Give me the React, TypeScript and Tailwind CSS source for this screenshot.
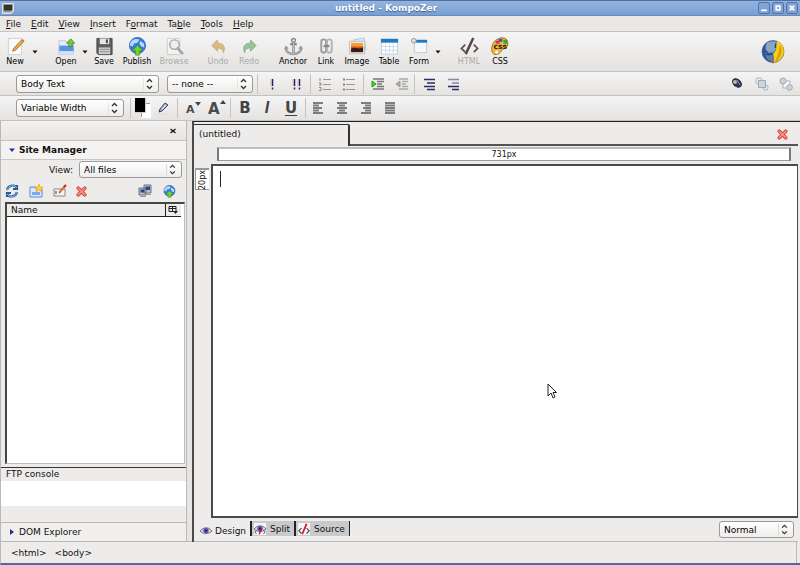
import type { ReactNode } from "react";
import clsx from "clsx";

const MENUS = ["File", "Edit", "View", "Insert", "Format", "Table", "Tools", "Help"];
// index of the underlined access key in each menu name
const MENU_KEYS = [0, 0, 0, 0, 1, 2, 0, 0];

const BAR = "bg-linear-to-b from-[#f6f5f5] to-[#e4e3e1] border-b border-[#c3c2c0]";

function Chevrons() {
  return (
    <svg className="pointer-events-none absolute top-0 right-1 h-full w-3" viewBox="0 0 12 18" fill="none" stroke="#333" strokeWidth="1.3">
      <path d="M0 3v12" stroke="#d4d3d1" strokeWidth="1" />
      <path d="M4 7 6.5 4.5 9 7M4 11 6.5 13.5 9 11" />
    </svg>
  );
}

function Select({ label, value, className }: { label: string; value: string; className: string }) {
  return (
    <div className={clsx("relative shrink-0", className)}>
      <select
        aria-label={label}
        className="block h-full w-full appearance-none rounded-[3px] border border-[#9b9a98] bg-linear-to-b from-white to-[#eeedeb] pr-4 pl-1 text-black"
      >
        <option>{value}</option>
      </select>
      <Chevrons />
    </div>
  );
}

function Sep({ className }: { className?: string }) {
  return <div className={clsx("h-5 w-px shrink-0 bg-[#c4c3c1]", className)} />;
}

function Tool({ label, off, className, children }: { label: string; off?: boolean; className?: string; children: ReactNode }) {
  return (
    <button disabled={off} className={clsx("flex w-[30px] shrink-0 flex-col items-center", className)}>
      <svg className={clsx("mb-px h-[19px] w-[19px]", off && label !== "HTML" && "opacity-60")} viewBox="0 0 20 20" fill="none">
        {children}
      </svg>
      <span className={clsx("text-[8px] leading-[9px] whitespace-nowrap", off ? "text-[#aaa9a7]" : "text-black")}>{label}</span>
    </button>
  );
}

function DropArrow({ label, className }: { label: string; className?: string }) {
  return (
    <button aria-label={label} className={clsx("w-2 shrink-0", className)}>
      <svg className="mx-auto h-1 w-1.5" viewBox="0 0 6 4">
        <path d="M0.5 0.5h5L3 3.5z" fill="#111" />
      </svg>
    </button>
  );
}

function Globe() {
  return (
    <>
      <circle cx="10" cy="9" r="8.5" fill="#2f7bdc" stroke="#3d6fb4" />
      <path d="M4 4c3-3 7-2 8-1l-2 3-4 1-1 3-3-1c0-2 1-4 2-5zM13 4l4 3v4l-3-1-2-3z" fill="#b5dafc" />
      <path d="m10 9 5.5 5.500H12V19H8v-4.500H4.500z" fill="#73d52a" stroke="#4da01c" />
    </>
  );
}

function RedCross() {
  return (
    <svg className="h-[11px] w-[11px]" viewBox="0 0 12 12" fill="none">
      <path d="M2.5 2.5 9.5 9.5M9.5 2.5 2.5 9.5" stroke="#d8443c" strokeWidth="4" strokeLinecap="round" />
      <path d="M2.5 2.5 9.5 9.5M9.5 2.5 2.5 9.5" stroke="#f68d84" strokeWidth="2" strokeLinecap="round" />
    </svg>
  );
}

function Mini({ label, className, children }: { label: string; className?: string; children: ReactNode }) {
  return (
    <button aria-label={label} className={clsx("flex h-4 w-4 shrink-0 items-center justify-center", className)}>
      <svg className="h-[14px] w-[14px]" viewBox="0 0 14 14" fill="none">
        {children}
      </svg>
    </button>
  );
}

function TitleBar() {
  return (
    <header className="flex h-4 shrink-0 items-center border-t border-b border-t-[#51709f] border-b-[#6889b9] bg-linear-to-b from-[#93b3e0] to-[#789fd3] px-0.5">
      <svg className="h-3 w-3" viewBox="0 0 12 12">
        <path d="M0 1h12v8l-3 3H0z" fill="#e0dfd8" />
        <path d="M1 2h10v6L8.5 10.5H1z" fill="#999" />
        <path d="M2 3h8v5.5H2z" fill="#30332f" />
      </svg>
      <h1 className="flex-1 text-center font-bold text-white [text-shadow:0_1px_1px_#3e5f91]">untitled - KompoZer</h1>
      <div className="flex gap-0.5">
        {["M3.5 9h6", "M4.5 4.5h4v4h-4z", "M4 4l5 5M9 4 4 9"].map((d, i) => (
          <button key={d} aria-label={["Minimize", "Maximize", "Close"][i]} className="h-3 w-3">
            <svg className="h-3 w-3" viewBox="0 0 13 13" fill="none">
              <rect x=".5" y=".5" width="12" height="12" rx="2" fill="#82a4d3" stroke="#45689e" />
              <path d={d} stroke="#fff" strokeWidth="1.8" />
            </svg>
          </button>
        ))}
      </div>
    </header>
  );
}

function MenuBar() {
  return (
    <nav className="flex h-4 shrink-0 items-center gap-2.5 border-b border-[#c3c2c0] bg-[#e9e8e6] pl-1.5">
      {MENUS.map((m, i) => (
        <button key={m}>
          {m.slice(0, MENU_KEYS[i])}
          <span className="underline">{m[MENU_KEYS[i]]}</span>
          {m.slice(MENU_KEYS[i] + 1)}
        </button>
      ))}
    </nav>
  );
}

function MainToolbar() {
  return (
    <div className={clsx("flex h-10 shrink-0 items-center", BAR)}>
      <Tool label="New">
        <path d="M2.5 1.5h14v17h-14z" fill="#fafafa" stroke="#cfcfcf" />
        <path d="m8 12 8.500-9 2 2L10 14l-3 1z" fill="#f2a93b" stroke="#8c6328" strokeWidth=".8" />
        <path d="m16.500 3 1-1 2 2-1 1z" fill="#d66" />
      </Tool>
      <DropArrow label="New options" className="ml-px" />
      <Tool label="Open" className="ml-3">
        <path d="M2 4h7l1 2h7v12H2z" fill="#e8eefa" stroke="#b5c4e4" />
        <path d="M2.500 9h15v6h-15z" fill="#5b90e8" />
        <path d="M3 15h14v3H3z" fill="#d4e1f8" />
        <path d="m14.500 2 4 4.500H16V10h-3.500V6.500H10z" fill="#74cf38" stroke="#3d9421" />
      </Tool>
      <DropArrow label="Open options" />
      <Tool label="Save">
        <path d="M2 1.500h16v17H3.500L2 17z" fill="#5d5d5d" stroke="#4c4c4c" />
        <path d="M5 1.500h10v6H5z" fill="#e6e6e6" />
        <path d="M11.500 2.500h2v4h-2z" fill="#444" />
        <path d="M4 11h12v7H4z" fill="#cfcfcf" />
        <path d="M5 13h10M5 15.500h10" stroke="#8a8a8a" />
      </Tool>
      <Tool label="Publish" className="ml-[3px]">
        <Globe />
      </Tool>
      <Tool label="Browse" off className="ml-[7px]">
        <path d="M2.500 1.500h13v17h-13z" fill="#f7f7f7" stroke="#bbb" />
        <circle cx="10" cy="8" r="5" fill="#eceeef" stroke="#777" strokeWidth="1.500" />
        <path d="m13.500 12 4.500 5" stroke="#777" strokeWidth="3" strokeLinecap="round" />
      </Tool>
      <Tool label="Undo" off className="ml-[14px]">
        <path d="M9 3v3.500c6 0 9 4 6 10 0-3.500-2-5-6-5V15L3 9z" fill="#c79a3c" stroke="#a98434" />
      </Tool>
      <Tool label="Redo" off className="ml-px">
        <path d="M11 3v3.500c-6 0-9 4-6 10 0-3.500 2-5 6-5V15l6-6z" fill="#5ca567" stroke="#4d8c58" />
      </Tool>
      <Tool label="Anchor" className="ml-[14px]">
        <circle cx="10" cy="3.500" r="2" stroke="#888" strokeWidth="1.500" />
        <path d="M10 6v12M6.500 7.500h7M2 11c0 4 3 7 8 7s8-3 8-7" stroke="#888" strokeWidth="2.600" />
        <path d="M10 6v12M2.500 12c0 4 3 6 7.500 6s7.500-2 7.500-6" stroke="#c4c4c4" />
        <path d="m0 13 2-4 3 3zM20 13l-2-4-3 3z" fill="#999" />
      </Tool>
      <Tool label="Link" className="ml-[3px]">
        <rect x="4.500" y="2.500" width="5" height="14" rx="2.500" stroke="#9b9b9b" strokeWidth="2" />
        <rect x="10.500" y="2.500" width="5" height="14" rx="2.500" stroke="#b2b2b2" strokeWidth="2" />
        <path d="M7 9.500h6" stroke="#888" strokeWidth="2.500" />
      </Tool>
      <Tool label="Image" className="ml-px">
        <path d="m6 3 11-2 2 12-12 3z" fill="#dce8f8" stroke="#b5c6de" />
        <path d="M1.500 4.500h16v13h-16z" fill="#fff" stroke="#bbb" />
        <path d="M3 6h13v5H3z" fill="#f1a03b" />
        <path d="M3 10h13v2H3z" fill="#cf5d20" />
        <path d="M3 12c4-2 8 1 13-1v5H3z" fill="#3a1d14" />
      </Tool>
      <Tool label="Table" className="ml-[2px]">
        <path d="M1.500 2h17v16h-17z" fill="#fff" stroke="#c0ccda" />
        <path d="M1 2h18v4H1z" fill="#187ac8" />
        <path d="M6 6v12M10 6v12M14 6v12M2 10h16M2 14h16" stroke="#cad8e6" />
      </Tool>
      <Tool label="Form">
        <path d="M4.500 3.500h13v13h-13z" fill="#f5f8fb" stroke="#b9c9d7" />
        <path d="M5 3h13v3H5z" fill="#187ac8" />
        <circle cx="4" cy="4" r="2.500" fill="#ddd" stroke="#999" />
      </Tool>
      <DropArrow label="Form options" />
      <Tool label="HTML" off className="ml-3">
        <path d="m5.500 8-4 4 4 4M14.500 8l4 4-4 4" stroke="#555" strokeWidth="1.800" />
        <path d="m14 1-8 17" stroke="#584545" strokeWidth="2.600" />
      </Tool>
      <Tool label="CSS" className="ml-px">
        <path d="M10 1c7-1 9 4 7 9-1 3-5 2-6 4-1 4-7 6-9 3-3-4-1-14 8-16z" fill="#f4b73d" stroke="#a36c17" />
        <path d="M5 4h4v3H5z" fill="#d7372f" />
        <path d="M8 2h4v3H8z" fill="#2859d0" />
        <path d="M13 3h4v4h-4z" fill="#35a43a" />
        <text x="2.500" y="13" fontSize="8" fontWeight="bold" fill="#222" fontFamily="DejaVu Sans">css</text>
        <circle cx="6" cy="16" r="1.500" fill="#fff" />
      </Tool>
      <svg className="mr-[15px] ml-auto h-6 w-6 shrink-0" viewBox="0 0 24 24">
        <circle cx="12" cy="11.500" r="11" fill="#31539c" stroke="#4a5272" strokeWidth=".6" />
        <path d="M7 2c4-1 7-1 9 0l-1 7-2 3-5 1-3-3c-1-3 0-7 2-8z" fill="#86a5c4" />
        <path d="m4 13 4 1 5-1v3l-2 6-5-3z" fill="#5b82a0" />
        <path d="m5 14 3 1 2-1 3 1M15 3l-1 4 1 1" stroke="#1b2d6d" fill="none" />
        <path d="M16 1c9 3 10 18-2 21l-2 2 1-7-1-3 3-4z" fill="#f6cf11" />
        <path d="M19 5c4 6 0 14-5 17l3-8z" fill="#dda005" />
        <path d="m11 22 3-1-2 3z" fill="#e5562c" />
      </svg>
    </div>
  );
}

function Bang({ x }: { x: number }) {
  return (
    <>
      <path d={`M${x} 2v7M${x} 10.500v2`} stroke="#1f2170" strokeWidth="1.500" />
      <path d={`M${x - 1.5} 2v7`} stroke="#e2a28c" strokeWidth=".7" />
    </>
  );
}

function FormatBars() {
  return (
    <>
      <div className={clsx("flex h-6 shrink-0 items-center pl-4", BAR)}>
        <Select label="Paragraph format" value="Body Text" className="h-[18px] w-[143px]" />
        <Select label="Class" value="-- none --" className="ml-2 h-[18px] w-[86px]" />
        <Sep className="ml-1" />
        <Mini label="Emphasize" className="ml-1.5">
          <Bang x={7.5} />
        </Mini>
        <Mini label="Strong emphasis" className="ml-2">
          <Bang x={5.5} />
          <Bang x={10.5} />
        </Mini>
        <Sep className="ml-1.5" />
        <Mini label="Numbered list" className="ml-1.5">
          <path d="M5 2.500h8M5 7.500h8M5 12.500h8" stroke="#999" />
          <path d="M2 1v3M1 6h2v2H1M1 10.500h2v3H1" stroke="#888" />
        </Mini>
        <Mini label="Bulleted list" className="ml-2">
          <path d="M4 2.500h9M4 7.500h9M4 12.500h9" stroke="#999" />
          <path d="M1 2.500h2M1 7.500h2M1 12.500h2" stroke="#888" strokeWidth="2" />
        </Mini>
        <Sep className="ml-1.5" />
        <Mini label="Indent" className="ml-1.5">
          <path d="M2 2h11M6 4.500h7M6 7h5M6 9.500h7M2 12h11" stroke="#777" strokeWidth="1.500" />
          <path d="M1 4v6l4-3z" fill="#39df24" stroke="#20a013" />
        </Mini>
        <Mini label="Outdent" className="ml-2">
          <path d="M4 2h9M7 4.500h6M7 7h4M7 9.500h6M4 12h9" stroke="#aaa" strokeWidth="1.500" />
          <path d="M5 4v6L1 7z" fill="#aaa" stroke="#999" />
        </Mini>
        <Sep className="ml-1" />
        <Mini label="Definition term" className="ml-1.5">
          <path d="M2 2.500h11M2 9.500h11" stroke="#282d68" strokeWidth="1.500" />
          <path d="M5 6h8M5 12.500h8" stroke="#282d68" strokeWidth="1.500" />
        </Mini>
        <Mini label="Definition" className="ml-2">
          <path d="M2 2.500h11M6 6h7" stroke="#8586a8" strokeWidth="1.500" />
          <path d="M2 9.500h11M6 12.500h7" stroke="#282d68" strokeWidth="1.500" />
        </Mini>
        <Mini label="Absolute position" className="ml-auto">
          <ellipse cx="6" cy="6" rx="5" ry="3.500" transform="rotate(40 6 6)" fill="#33365f" stroke="#20234b" />
          <circle cx="4" cy="5" r="2" fill="#b5b9a7" />
          <path d="m6 3 3 5" stroke="#999" />
        </Mini>
        <Mini label="Bring to front" className="ml-2">
          <rect x="1" y="1" width="6" height="6" rx="2" stroke="#a5b3c3" />
          <rect x="8" y="8" width="5" height="5" rx="2" stroke="#a5b3c3" />
          <rect x="3.500" y="3.500" width="7" height="7" fill="#cfd3d7" stroke="#9cacbd" />
        </Mini>
        <Mini label="Send to back" className="mr-1.5 ml-2">
          <path d="M4 4h7v7H4z" stroke="#a5b3c3" fill="#f4f5f6" />
          <circle cx="4" cy="4" r="3" fill="#cfd3d7" stroke="#9cacbd" />
          <circle cx="10.500" cy="10.500" r="2.800" fill="#cfd3d7" stroke="#9cacbd" />
        </Mini>
      </div>
      <div className={clsx("flex h-[25px] shrink-0 items-center pl-4", BAR)}>
        <Select label="Font" value="Variable Width" className="h-[18px] w-[108px]" />
        <Sep className="ml-1.5" />
        <button aria-label="Text and background colour" className="ml-1 h-5 w-4 shrink-0">
          <svg className="h-5 w-4" viewBox="0 0 16 20">
            <path d="M6 5h10v15H6z" fill="#fff" />
            <path d="M11 5.500h4M6.500 15v4" stroke="#999" />
            <path d="M0 0h11v15H0z" fill="#ccc" />
            <path d="M0 0h10v14H0z" fill="#000" />
          </svg>
        </button>
        <Mini label="Highlight colour" className="ml-1">
          <path d="m4 8 5-6 3 2-6 6-3 1z" fill="#a7b4cc" stroke="#39435a" />
          <path d="m6 8 4-4" stroke="#eee" />
          <path d="M1 13h10" stroke="#ddd" />
        </Mini>
        <Sep className="ml-1.5" />
        <button className="ml-2 flex h-5 w-4 shrink-0 items-center text-[11px] font-bold text-[#4a4a4a]" aria-label="Smaller font">
          <span className="pt-1">A</span>
          <svg className="mb-2 h-1 w-1.5" viewBox="0 0 6 4">
            <path d="M0 0h6L3 4z" fill="#444" />
          </svg>
        </button>
        <button className="ml-1.5 flex h-5 w-4 shrink-0 items-center text-[15px] font-bold text-[#4a4a4a]" aria-label="Larger font">
          <span className="pt-0.5">A</span>
          <svg className="mb-3 h-1 w-1.5 shrink-0" viewBox="0 0 6 4">
            <path d="M0 4h6L3 0z" fill="#444" />
          </svg>
        </button>
        <Sep className="ml-1.5" />
        <button className="ml-1.5 w-4 shrink-0 text-[15px] font-bold text-[#444]" aria-label="Bold">B</button>
        <button className="ml-1.5 w-4 shrink-0 font-['Liberation_Sans',sans-serif] text-[16px] font-bold text-[#444] italic" aria-label="Italic">I</button>
        <button className="ml-2 w-4 shrink-0 text-[15px] font-bold text-[#444] underline underline-offset-2" aria-label="Underline">U</button>
        <Sep className="ml-1.5" />
        {[
          ["Align left", "M2 2h10M2 4.500h6M2 7h9M2 9.500h6M2 12h10"],
          ["Center", "M2 2h10M4 4.500h6M2 7h10M4 9.500h6M2 12h10"],
          ["Align right", "M2 2h10M6 4.500h6M4 7h8M6 9.500h6M2 12h10"],
          ["Justify", "M2 2h10M2 4.500h10M2 7h10M2 9.500h10M2 12h10"],
        ].map(([name, d], i) => (
          <Mini key={name} label={name} className={i === 0 ? "ml-1" : "ml-2"}>
            <path d={d} stroke="#7d7d7d" strokeWidth="2" />
          </Mini>
        ))}
      </div>
    </>
  );
}

function SiteManager() {
  return (
    <aside className="flex w-[187px] shrink-0 flex-col border-r border-l border-[#bab9b7] bg-[#edeceb]">
      <div className="flex h-5 items-center justify-end border-b border-[#c3c2c0] bg-linear-to-b from-[#f3f2f1] to-[#e6e5e3] pr-[9px]">
        <button aria-label="Close sidebar">
          <svg className="h-2 w-2" viewBox="0 0 8 8">
            <path d="m1.500 2 5 4M6.500 2l-5 4" stroke="#111" strokeWidth="1.300" />
          </svg>
        </button>
      </div>
      <button className="flex h-[19px] items-center gap-1 border-b border-[#c9c8c6] bg-[#f4f3f2] pl-2 font-bold">
        <svg className="h-1.5 w-1.5" viewBox="0 0 6 6">
          <path d="M0 1.500h6L3 5z" fill="#27308c" />
        </svg>
        Site Manager
      </button>
      <div className="mt-px flex items-center justify-end gap-1.5 pr-1">
        <span>View:</span>
        <Select label="View" value="All files" className="h-[17px] w-[103px]" />
      </div>
      <div className="flex items-center gap-2 pt-[5px] pr-[9px] pb-[3px] pl-[3px]">
        <Mini label="Refresh">
          <path d="M2 6c1-5 8-6 10-2M12 1v4H8M12 8c-1 5-8 6-10 2M2 13V9h4" stroke="#285b9c" strokeWidth="2.200" />
          <path d="M2 6c1-5 8-6 10-2M12 8c-1 5-8 6-10 2" stroke="#88b1df" />
        </Mini>
        <Mini label="New folder">
          <path d="M1 3h5l1 2h6v8H1z" fill="#dce8fb" stroke="#5688d2" />
          <path d="M3 8h8v3H3z" fill="#7baaf0" />
          <path d="m10 0 1 3h3l-2 2 1 3-3-2-3 2 1-3-2-2h3z" fill="#ffd52e" stroke="#e59a10" strokeWidth=".6" />
        </Mini>
        <Mini label="Rename">
          <path d="M1 5h11v7H1z" fill="#f4f4f4" stroke="#888" />
          <path d="M3 7v3" stroke="#333" />
          <path d="m6 9 6-7" stroke="#c5773b" strokeWidth="2" />
          <path d="m11 3 2-2" stroke="#c22" strokeWidth="2" />
        </Mini>
        <button aria-label="Delete">
          <RedCross />
        </button>
        <Mini label="Edit sites" className="ml-auto">
          <path d="M6 1h7v8H6zM1 4h7v7H1z" fill="#bcc2ca" stroke="#6a727e" />
          <path d="M7.500 2.500H12V6H7.500zM2.500 5.500h4v3h-4z" fill="#27478b" />
          <path d="M2 12.500h6M8 10.500h5" stroke="#999" />
        </Mini>
        <button aria-label="Publish site" className="flex h-4 w-4 items-center justify-center">
          <svg className="h-[13px] w-[13px]" viewBox="0 0 20 20" fill="none">
            <Globe />
          </svg>
        </button>
      </div>
      <div className="mr-px ml-1 flex-1 border-t-2 border-r border-b border-l-2 border-[#44474a] border-r-[#bbb] border-b-[#bbb] bg-white pr-[3px]">
        <table className="w-full border-collapse">
          <thead>
            <tr className="border-b border-[#222] bg-[#edeceb] text-left">
              <th className="p-0 pl-1 font-normal">Name</th>
              <th className="w-4 border-l border-[#222] p-0">
                <button aria-label="Choose columns" className="mx-auto block">
                  <svg className="h-2 w-2.5" viewBox="0 0 10 8" fill="none">
                    <path d="M1 .5h7v5H1zM1 2.500h7M4.500 0v6" stroke="#222" />
                    <path d="M5 5h5L7.500 8z" fill="#222" />
                  </svg>
                </button>
              </th>
            </tr>
          </thead>
        </table>
      </div>
      <div className="mt-[3px] border-t border-[#333] pl-[5px] leading-[13px]">FTP console</div>
      <div className="h-[25px] bg-white" />
      <div className="h-4" />
      <button className="flex h-5 items-center gap-1 border-t border-b border-[#bab9b7] bg-[#f0efee] pl-2">
        <svg className="h-1.5 w-1.5" viewBox="0 0 6 6">
          <path d="M1 0v6l4-3z" fill="#27308c" />
        </svg>
        DOM Explorer
      </button>
    </aside>
  );
}

function Eye() {
  return (
    <>
      <path d="M0 7c4-5 10-5 14 0-4 4-10 4-14 0z" fill="#d8cfdc" stroke="#7a5a74" />
      <circle cx="7" cy="6.500" r="3" fill="#4b4eae" />
      <circle cx="7" cy="6.500" r="1" fill="#16163e" />
    </>
  );
}

function EditorPane() {
  return (
    <main className="flex min-w-0 flex-1 flex-col border-t border-l-2 border-t-[#222] border-l-[#4a4a4a] bg-[#edeceb] pr-0.5">
      <div className="flex h-6 shrink-0 pt-0.5">
        <button className="w-[156px] rounded-tr-xs border-t border-r-2 border-[#333] pb-1 pl-[5px] text-left">(untitled)</button>
        <div className="flex flex-1 items-center justify-end border-b-2 border-[#55535a] pr-2.5">
          <button aria-label="Close tab">
            <RedCross />
          </button>
        </div>
      </div>
      <div className="mt-px mr-[7px] ml-[23px] h-[14px] shrink-0 border-x-2 border-t-2 border-b border-x-[#77777c] border-t-[#bdbcc1] border-b-[#999] bg-white text-center text-[8px] leading-[11px]">
        731px
      </div>
      <div className="mt-[3px] flex flex-1">
        <div className="w-[17px] shrink-0 pt-1">
          <div className="ml-px flex h-[22px] w-[14px] items-center justify-center border-t-2 border-b border-l border-[#99999d] bg-white">
            <span className="rotate-180 text-[8px] leading-none [writing-mode:vertical-rl]">20px</span>
          </div>
        </div>
        <div className="relative flex flex-1 border-t-2 border-r border-b-2 border-l-2 border-[#4a4a4a] bg-white">
          <textarea aria-label="Page content" className="w-full resize-none bg-transparent p-2 outline-none" />
          <div className="absolute top-[5px] left-[7px] h-4 w-px bg-[#222]" />
          <svg className="absolute top-[62%] left-[57%] h-4 w-3" viewBox="0 0 12 16">
            <path d="M2 1v12l3-3 2 5 2-1-2-4.500h3.500z" fill="#fff" stroke="#222" />
          </svg>
        </div>
      </div>
      <div className="flex h-6 shrink-0 items-start border-b border-[#bab9b7] pr-1">
        <button className="flex h-full w-14 items-center gap-[3px] pt-0.5 pl-1.5">
          <svg className="h-3 w-3 shrink-0" viewBox="0 0 14 14" fill="none">
            <Eye />
          </svg>
          Design
        </button>
        <div className="mt-[3px] flex h-[15px]">
          <button className="flex w-[46px] items-center gap-1 border-r-2 border-l-2 border-[#222] bg-[#c9cace] pl-0.5">
            <svg className="h-3 w-3 shrink-0" viewBox="0 0 14 14" fill="none">
              <rect width="14" height="14" fill="#f5f5f7" />
              <Eye />
              <path d="m3 8-2 2.500L3 13M11 8l2 2.500-2 2.500" stroke="#444" />
              <path d="m9 7-3 6" stroke="#d12" strokeWidth="1.600" />
            </svg>
            Split
          </button>
          <button className="flex w-[54px] items-center gap-1 border-r border-[#222] bg-[#c9cace] pl-0.5">
            <svg className="h-3 w-3 shrink-0" viewBox="0 0 14 14" fill="none">
              <rect width="14" height="14" fill="#f5f5f7" />
              <path d="m4 6-3 3 3 3.500M10 6l3 3-3 3.500" stroke="#444" strokeWidth="1.300" />
              <path d="M10 1 5 13" stroke="#d12" strokeWidth="2" />
            </svg>
            Source
          </button>
        </div>
        <Select label="View mode" value="Normal" className="mt-[3px] ml-auto h-[17px] w-[75px]" />
      </div>
    </main>
  );
}

export default function App() {
  return (
    <div className="flex min-h-screen flex-col bg-[#edeceb] font-['DejaVu_Sans',sans-serif] text-[9px] leading-3 text-[#111]">
      <TitleBar />
      <MenuBar />
      <MainToolbar />
      <FormatBars />
      <div className="flex flex-1">
        <SiteManager />
        <div className="w-[5px] shrink-0 border-b border-[#bab9b7] bg-[#e6e5e3]" />
        <EditorPane />
      </div>
      <footer className="flex h-[23px] shrink-0 items-stretch border-b-2 border-l border-b-[#536b93] border-l-[#bab9b7] pr-[3px] pl-2.5">
        <button>&lt;html&gt;</button>
        <button className="ml-2">&lt;body&gt;</button>
        <div className="ml-auto w-px bg-[#bab9b7]" />
      </footer>
    </div>
  );
}
